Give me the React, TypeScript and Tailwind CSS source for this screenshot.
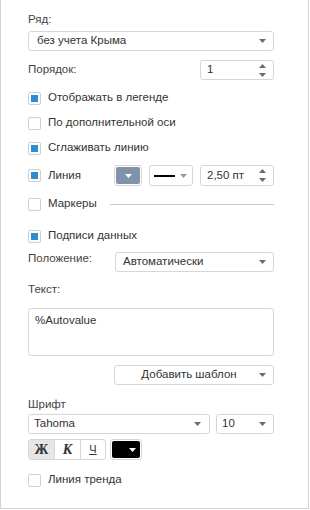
import React from "react";

const font = { fontFamily: '"Liberation Sans", Arial, sans-serif' };

function Arrow({ color = "#6b6b6b" }: { color?: string }) {
  return (
    <svg width="7" height="4" viewBox="0 0 7 4">
      <path d="M0 0 L7 0 L3.5 4 Z" fill={color} />
    </svg>
  );
}

function Spin() {
  return (
    <svg width="7" height="13" viewBox="0 0 7 13">
      <path d="M0 4 L7 4 L3.5 0 Z" fill="#6b6b6b" />
      <path d="M0 9 L7 9 L3.5 13 Z" fill="#6b6b6b" />
    </svg>
  );
}

function Check({ checked, label, className = "" }: { checked?: boolean; label: string; className?: string }) {
  return (
    <div className={"flex items-center h-[14px] " + className}>
      <div className="w-[13px] h-[13px] border border-[#cfcfcf] rounded-[2px] bg-white flex items-center justify-center">
        {checked && <div className="w-[7px] h-[7px] bg-[#2d8ccd]" />}
      </div>
      <span className="ml-[7px] text-[11.5px] text-[#333]">{label}</span>
    </div>
  );
}

export default function App() {
  return (
    <div style={font} className="w-[309px] h-[509px] border border-t-0 border-[#d3d3d3] bg-white pl-[27px] pr-[34px] text-[#333] text-[11.5px]">
      <div className="pt-[12px] h-[26px] leading-[14px] text-[#444]">Ряд:</div>
      <div className="mt-[5px] h-[20px] border border-[#d6d6d6] rounded-[3px] flex items-center justify-between pl-[8px] pr-[7px]">
        <span>без учета Крыма</span>
        <Arrow />
      </div>
      <div className="mt-[9px] h-[20px] flex items-center justify-between">
        <span className="text-[#444]">Порядок:</span>
        <div className="w-[74px] h-[20px] border border-[#d6d6d6] rounded-[3px] flex items-center justify-between pl-[6px] pr-[7px]">
          <span>1</span>
          <Spin />
        </div>
      </div>
      <Check checked label="Отображать в легенде" className="mt-[11px]" />
      <Check label="По дополнительной оси" className="mt-[11px]" />
      <Check checked label="Сглаживать линию" className="mt-[11px]" />
      <div className="mt-[10px] h-[21px] flex items-center">
        <div className="w-[86px]">
          <Check checked label="Линия" />
        </div>
        <div className="w-[28px] h-[21px] border border-[#d6d6d6] rounded-[3px] p-[1px]">
          <div className="w-full h-full bg-[#8093aa] rounded-[2px] flex items-center justify-center">
            <Arrow color="#ffffff" />
          </div>
        </div>
        <div className="ml-[7px] w-[44px] h-[21px] border border-[#d6d6d6] rounded-[3px] flex items-center pl-[4px] pr-[5px] justify-between">
          <div className="w-[21px] h-[2px] bg-black" />
          <Arrow color="#9a9a9a" />
        </div>
        <div className="ml-[7px] w-[74px] h-[21px] border border-[#d6d6d6] rounded-[3px] flex items-center justify-between pl-[6px] pr-[7px]">
          <span>2,50 пт</span>
          <Spin />
        </div>
      </div>
      <div className="mt-[11px] h-[14px] flex items-center">
        <Check label="Маркеры" />
        <div className="flex-1 ml-[13px] h-px bg-[#c8c8c8]" />
      </div>
      <Check checked label="Подписи данных" className="mt-[18px]" />
      <div className="mt-[9px] h-[20px] flex items-center">
        <span className="w-[87px] text-[#444] -mt-[7px]">Положение:</span>
        <div className="flex-1 h-[20px] border border-[#d6d6d6] rounded-[3px] flex items-center justify-between pl-[7px] pr-[7px]">
          <span>Автоматически</span>
          <Arrow />
        </div>
      </div>
      <div className="mt-[10px] h-[14px] leading-[14px] text-[#444]">Текст:</div>
      <div className="mt-[12px] h-[48px] border border-[#d6d6d6] rounded-[3px] pl-[6px] pt-[3px]">%Autovalue</div>
      <div className="mt-[9px] h-[20px] flex justify-end">
        <div className="w-[160px] h-[20px] border border-[#d6d6d6] rounded-[3px] flex items-center pr-[7px]">
          <span className="flex-1 text-center pl-[4px]">Добавить шаблон</span>
          <Arrow />
        </div>
      </div>
      <div className="mt-[12px] h-[14px] leading-[14px] text-[#444]">Шрифт</div>
      <div className="mt-[3px] h-[20px] flex">
        <div className="w-[182px] h-[20px] border border-[#d6d6d6] rounded-[3px] flex items-center justify-between pl-[5px] pr-[8px]">
          <span>Tahoma</span>
          <Arrow />
        </div>
        <div className="ml-[6px] flex-1 h-[20px] border border-[#d6d6d6] rounded-[3px] flex items-center justify-between pl-[5px] pr-[7px]">
          <span>10</span>
          <Arrow />
        </div>
      </div>
      <div className="mt-[5px] h-[21px] flex">
        <div className="w-[78px] h-[21px] border border-[#d6d6d6] rounded-[3px] flex overflow-hidden">
          <div className="w-[26px] h-full bg-[#e6e6e6] flex items-center justify-center border-r border-[#d6d6d6] text-[14px] font-bold" style={{ fontFamily: '"Liberation Serif", serif' }}>Ж</div>
          <div className="w-[26px] h-full flex items-center justify-center border-r border-[#d6d6d6] text-[14px] italic font-bold" style={{ fontFamily: '"Liberation Serif", serif' }}>К</div>
          <div className="flex-1 h-full flex items-center justify-center text-[11px] underline">Ч</div>
        </div>
        <div className="ml-[4px] w-[32px] h-[21px] border border-[#d6d6d6] rounded-[3px] p-[1px]">
          <div className="w-full h-full bg-black rounded-[2px] flex items-center justify-center pl-[12px]">
            <Arrow color="#ffffff" />
          </div>
        </div>
      </div>
      <Check label="Линия тренда" className="mt-[13px]" />
    </div>
  );
}
